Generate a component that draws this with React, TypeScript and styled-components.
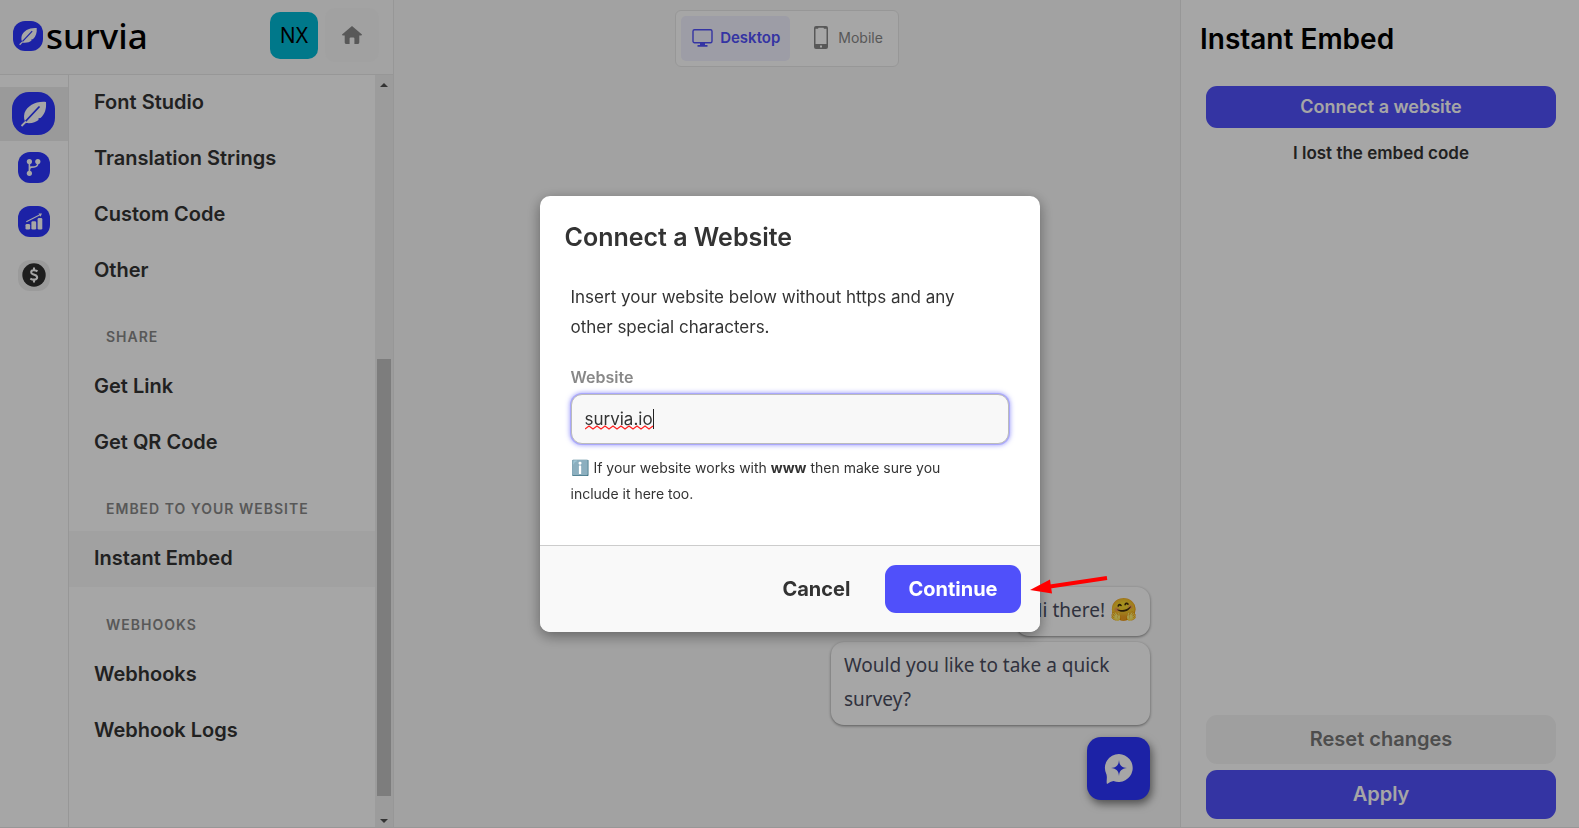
import React from 'react';
import styled, { createGlobalStyle, css } from 'styled-components';

const GlobalStyle = createGlobalStyle`
  *, *::before, *::after { box-sizing: border-box; }
  html, body, #root { height: 100%; }
  body { margin: 0; background: #fff; color: #333; font-family: Inter, Roboto, sans-serif; }
  button, input { font-family: inherit; }
  h1, h2, p, ul { margin: 0; padding: 0; }
`;

const border = '#e9e9e9';
const brand = '#2b35ff';
const primary = '#5050fa';

const Page = styled.div`
  display: flex;
  height: 100vh;
  min-height: 640px;
  overflow: hidden;
  border-bottom: 1px solid ${border};
`;

const Sidebar = styled.aside`
  display: flex;
  flex-direction: column;
  width: 394px;
  flex-shrink: 0;
  border-right: 1px solid ${border};
`;

const SidebarHeader = styled.header`
  display: flex;
  align-items: center;
  justify-content: space-between;
  height: 75px;
  flex-shrink: 0;
  padding: 0 14px 4px 13px;
  background: #fafafa;
  border-bottom: 1px solid ${border};
`;

const Logo = styled.a`
  display: flex;
  align-items: center;
  gap: 3px;
  padding-top: 2px;
  color: #000;
  text-decoration: none;
`;

const LogoText = styled.span`
  font: 500 35px/40px 'Noto Sans', sans-serif;
`;

const HeaderActions = styled.div`
  display: flex;
  align-items: center;
  gap: 7px;
`;

const Avatar = styled.button`
  width: 48px;
  height: 47px;
  padding: 0;
  border: 0;
  border-radius: 10px;
  background: #00b8d4;
  color: #000;
  font: 400 21px/47px 'Noto Sans', sans-serif;
`;

const HomeButton = styled.button`
  display: grid;
  place-items: center;
  width: 54px;
  height: 54px;
  padding: 0;
  border: 0;
  border-radius: 10px;
  background: #f8f8f8;
  color: #888;
`;

const SidebarBody = styled.div`
  display: flex;
  flex: 1;
  min-height: 0;
`;

const Rail = styled.nav`
  width: 69px;
  flex-shrink: 0;
  padding-top: 12px;
  border-right: 1px solid ${border};
`;

const RailButton = styled.button<{ $active?: boolean }>`
  display: grid;
  place-items: center;
  width: 100%;
  height: 54px;
  padding: 0 1px 2px 0;
  border: 0;
  background: ${p => (p.$active ? '#ededed' : 'transparent')};
`;

const IconTile = styled.span<{ $size?: 'logo' | 'large'; $muted?: boolean }>`
  display: grid;
  place-items: center;
  width: 32px;
  height: 31px;
  border-radius: 12px;
  background: ${p => (p.$muted ? '#efefef' : brand)};
  ${p => p.$size === 'large' && css`width: 43px; height: 43px; border-radius: 17px;`}
  ${p => p.$size === 'logo' && css`width: 30px; height: 30px; border-radius: 12px;`}
`;

const Menu = styled.nav`
  flex: 1;
  overflow: hidden;
`;

const MenuHeading = styled.h2`
  padding: 28px 37px 0;
  height: 60px;
  color: #888;
  font-size: 14px;
  line-height: 20px;
  font-weight: 600;
  letter-spacing: 1px;
`;

const MenuLink = styled.a<{ $active?: boolean }>`
  display: block;
  height: 56px;
  padding: 0 25px;
  color: #333;
  background: ${p => (p.$active ? '#f8f8f8' : 'transparent')};
  font-size: 20px;
  line-height: 55px;
  font-weight: 600;
  text-decoration: none;
`;

const ScrollTrack = styled.div`
  display: flex;
  flex-direction: column;
  justify-content: space-between;
  align-items: center;
  width: 18px;
  padding: 7px 0 3px;
  background: #f0f0f0;
`;

const ScrollSpace = styled.div`
  display: flex;
  flex-direction: column;
  justify-content: flex-end;
  flex: 1;
  padding: 4px 0 23px;
`;

const ScrollThumb = styled.div`
  width: 14px;
  height: 62%;
  background: #c1c1c1;
`;

const Canvas = styled.main`
  display: flex;
  flex-direction: column;
  justify-content: space-between;
  flex: 1;
  min-width: 0;
  background: #f9f9f9;
  padding: 10px 30px 27px;
`;

const DeviceSwitch = styled.div`
  display: flex;
  align-self: center;
  height: 57px;
  padding: 5px;
  border: 1px solid ${border};
  border-radius: 6px;
  background: #fff;
`;

const DeviceButton = styled.button<{ $active?: boolean }>`
  display: flex;
  align-items: center;
  gap: ${p => (p.$active ? 7 : 10)}px;
  padding: 0 10px 2px ${p => (p.$active ? 11 : 24)}px;
  border: 0;
  border-radius: 5px;
  background: ${p => (p.$active ? '#f2f2ff' : 'transparent')};
  color: ${p => (p.$active ? primary : '#888')};
  font-size: ${p => (p.$active ? 15 : 14)}px;
  line-height: 20px;
  font-weight: ${p => (p.$active ? 600 : 400)};
`;

const Widget = styled.section`
  display: flex;
  flex-direction: column;
  align-items: flex-end;
`;

const Bubble = styled.p`
  width: fit-content;
  max-width: 319px;
  margin-bottom: 6px;
  padding: 6px 13px 9px;
  border-radius: 13px;
  background: #fff;
  box-shadow: 0 1px 3px rgba(0, 0, 0, 0.45);
  color: #4a4d60;
  font: 400 19px/34px 'Noto Sans', 'Open Sans', sans-serif;
`;

const Emoji = styled.span<{ $size: number }>`
  font-size: ${p => p.$size}px;
  line-height: 1;
`;

const Launcher = styled.button`
  display: grid;
  place-items: center;
  width: 63px;
  height: 63px;
  margin-top: 6px;
  padding: 0;
  border: 0;
  border-radius: 14px;
  background: ${brand};
  box-shadow: 2px 4px 8px rgba(0, 0, 0, 0.5);
`;

const Panel = styled.aside`
  display: flex;
  flex-direction: column;
  width: 399px;
  flex-shrink: 0;
  padding: 19px 20px 8px 19px;
  border-left: 1px solid ${border};
`;

const PanelTitle = styled.h1`
  color: #000;
  font-size: 28px;
  line-height: 40px;
  font-weight: 600;
`;

const PanelActions = styled.div<{ $bottom?: boolean }>`
  display: flex;
  flex-direction: column;
  gap: 6px;
  padding: 0 3px 0 6px;
  margin-top: ${p => (p.$bottom ? 'auto' : '27px')};
`;

const PanelButton = styled.button<{ $tone: 'primary' | 'plain' | 'disabled'; $tall?: boolean }>`
  height: ${p => (p.$tall ? 49 : p.$tone === 'plain' ? 40 : 42)}px;
  padding: 0 0 2px;
  border: 0;
  border-radius: 11px;
  font-size: ${p => (p.$tall ? 20 : p.$tone === 'plain' ? 17 : 18)}px;
  font-weight: 600;
  ${p => p.$tone === 'primary' && css`background: ${primary}; color: #fff;`}
  ${p => p.$tone === 'plain' && css`background: transparent; color: #333;`}
  ${p => p.$tone === 'disabled' && css`background: #f5f5f5; color: #777;`}
`;

const Overlay = styled.div`
  position: fixed;
  inset: 0;
  display: grid;
  place-items: center;
  background: rgba(0, 0, 0, 0.35);
`;

const Modal = styled.form`
  position: relative;
  width: 500px;
  border-radius: 10px;
  background: #fff;
  box-shadow: 0 4px 14px rgba(0, 0, 0, 0.4);
`;

const ModalTitle = styled.h2`
  padding: 24px 25px 0;
  font-size: 25px;
  line-height: 34px;
  font-weight: 600;
  color: #333;
`;

const ModalBody = styled.div`
  display: flex;
  flex-direction: column;
  padding: 28px 31px 38px 31px;
`;

const Lead = styled.p`
  padding-right: 40px;
  font-size: 17px;
  line-height: 30px;
`;

const FieldLabel = styled.label`
  margin-top: 23px;
  color: #888;
  font-size: 16px;
  line-height: 24px;
  font-weight: 600;
`;

const Field = styled.div`
  position: relative;
  display: flex;
  margin-top: 5px;
`;

const TextInput = styled.input`
  width: 100%;
  height: 50px;
  padding: 0 13px;
  border: 1px solid #bbb;
  border-radius: 11px;
  outline: none;
  background: #f8f8f8;
  box-shadow: 0 0 0 1px #aaa8fc, 0 0 5px 1px rgba(80, 80, 250, 0.6);
  color: #333;
  font-size: 17px;
  line-height: 24px;
  caret-color: transparent;
`;

const SpellMark = styled.svg`
  position: absolute;
  left: 14px;
  top: 15px;
  pointer-events: none;
`;

const Hint = styled.p`
  margin-top: 11px;
  padding-right: 40px;
  font-size: 14px;
  line-height: 26px;
`;

const ModalFooter = styled.footer`
  display: flex;
  justify-content: flex-end;
  gap: 12px;
  padding: 19px;
  border-top: 1px solid #ccc;
  border-radius: 0 0 10px 10px;
  background: #f9f9f9;
`;

const ModalButton = styled.button<{ $primary?: boolean }>`
  height: 48px;
  padding: 0 23px;
  border: 0;
  border-radius: 11px;
  background: ${p => (p.$primary ? primary : 'transparent')};
  color: ${p => (p.$primary ? '#fff' : '#333')};
  font-size: 20px;
  font-weight: 700;
`;

const Pointer = styled.svg`
  position: absolute;
  left: 490px;
  bottom: 30px;
  pointer-events: none;
`;

const Feather = ({ size }: { size: number }) => (
  <svg width={size} height={size} viewBox="0 0 43 43" aria-hidden="true">
    <path d="M34 10C34.500 17 33 22 28.500 26L26.500 26.300L26.500 28C23.500 30.500 20 31.500 14 31C12 28.500 11.500 25 12.500 21C15.500 13.500 24 9 34 10Z" fill="#fff" />
    <path d="M27.500 14.500L12 31" stroke={brand} strokeWidth="1.800" />
    <path d="M14 29.500L9.500 34" stroke="#fff" strokeWidth="1.800" />
  </svg>
);

const BranchIcon = () => (
  <svg width="32" height="31" viewBox="0 0 32 31" fill="none" stroke="#fff" strokeWidth="1.600" aria-hidden="true">
    <path d="M11.400 9.500V21.500M19.800 9.500V11.500Q19.500 14.800 16 15L13.500 15.100Q11.600 15.300 11.400 18" />
    <g fill="#fff" stroke="none"><circle cx="11.400" cy="9.500" r="2.600" /><circle cx="19.800" cy="9.500" r="2.600" /><circle cx="11.400" cy="21.300" r="2.600" /></g>
  </svg>
);

const ChartIcon = () => (
  <svg width="32" height="31" viewBox="0 0 32 31" fill="#fff" aria-hidden="true">
    <rect x="7.500" y="18" width="4.600" height="5.500" rx="1.300" />
    <rect x="13.400" y="15.300" width="4.800" height="8.200" rx="1.300" />
    <rect x="19.600" y="12" width="4.700" height="11.500" rx="1.300" />
    <path d="M8.300 15.700L22.500 8.600" stroke="#fff" strokeWidth="1.100" />
    <path d="M20.500 7.500L24 7.400L22.500 10.700Z" />
  </svg>
);

const DollarIcon = () => (
  <svg width="24" height="24" viewBox="0 0 24 24" aria-hidden="true">
    <circle cx="12" cy="12" r="11.700" fill="#2e2e2e" />
    <path d="M15.500 8.300C14 7.500 12.500 7.200 11.300 7.300C8.600 7.600 8.500 10.400 11 11.200L13 11.900C16 12.900 15.700 16.200 12.800 16.600C11.300 16.800 9.700 16.400 8.300 15.600M12 4.500V7.500M12 16.300V19.500" fill="none" stroke="#fff" strokeWidth="2.100" />
  </svg>
);

const HomeIcon = () => (
  <svg width="20" height="18" viewBox="0 0 20 18" fill="currentColor" aria-hidden="true">
    <path d="M10 0L20 8.500Q20 9.400 19 9.400H17.300V16.600Q17.300 18 16 18H12.400V12.500Q12.400 11.500 11.400 11.500H8.600Q7.600 11.500 7.600 12.500V18H4Q2.700 18 2.700 16.600V9.400H1Q0 9.400 0 8.500Z" />
  </svg>
);

const DesktopIcon = () => (
  <svg width="21" height="20" viewBox="0 0 21 20" fill="currentColor" aria-hidden="true">
    <rect x="1" y="1.700" width="19" height="13" rx="1.500" fill="none" stroke="currentColor" strokeWidth="1.400" />
    <path d="M8 15H13V17H15.500V18.800H5.500V17H8Z" />
  </svg>
);

const MobileIcon = () => (
  <svg width="14" height="23" viewBox="0 0 14 23" aria-hidden="true">
    <path fillRule="evenodd" fill="currentColor" d="M2 0H12Q14 0 14 2V21Q14 23 12 23H2Q0 23 0 21V2Q0 0 2 0ZM1.500 2.700V18H12.500V2.700H10L9.500 1.800H4.500L4 2.700ZM6 19.400V21.400H8V19.400Z" />
  </svg>
);

const ChatIcon = () => (
  <svg width="30" height="32" viewBox="0 0 30 32" aria-hidden="true">
    <path d="M15 1A14 14 0 1 1 9.500 28C7 28.300 5.500 29.500 3 31C2 28 3.500 26 2.500 21.500A14 14 0 0 1 15 1Z" fill="#fff" />
    <path d="M15 7C15.500 12.500 17.500 14.500 23 15C17.500 15.700 15.500 17.500 15 23C14.500 17.500 12.500 15.700 7 15C12.500 14.500 14.500 12.500 15 7Z" fill={brand} />
  </svg>
);

const Arrow = ({ down }: { down?: boolean }) => (
  <svg width="8" height="5" viewBox="0 0 8 5" aria-hidden="true">
    <path d={down ? 'M0 0H8L4 4Z' : 'M0 5H8L4 1Z'} fill="#505050" />
  </svg>
);

const squiggle = Array.from({ length: 18 }, (_, i) => `${i === 0 ? 'M' : 'L'}${i * 4} ${i % 2 ? 17 : 20}`).join(' ');

const menu = [
  { title: '', links: ['Font Studio', 'Translation Strings', 'Custom Code', 'Other'] },
  { title: 'SHARE', links: ['Get Link', 'Get QR Code'] },
  { title: 'EMBED TO YOUR WEBSITE', links: ['Instant Embed'] },
  { title: 'WEBHOOKS', links: ['Webhooks', 'Webhook Logs'] },
];

export default function App() {
  return (
    <>
      <GlobalStyle />
      <Page>
        <Sidebar>
          <SidebarHeader>
            <Logo href="#">
              <IconTile $size="logo"><Feather size={30} /></IconTile>
              <LogoText>survia</LogoText>
            </Logo>
            <HeaderActions>
              <Avatar type="button">NX</Avatar>
              <HomeButton type="button" aria-label="Home"><HomeIcon /></HomeButton>
            </HeaderActions>
          </SidebarHeader>
          <SidebarBody>
            <Rail>
              <RailButton $active type="button" aria-label="Design"><IconTile $size="large"><Feather size={43} /></IconTile></RailButton>
              <RailButton type="button" aria-label="Flow"><IconTile><BranchIcon /></IconTile></RailButton>
              <RailButton type="button" aria-label="Analytics"><IconTile><ChartIcon /></IconTile></RailButton>
              <RailButton type="button" aria-label="Billing"><IconTile $muted><DollarIcon /></IconTile></RailButton>
            </Rail>
            <Menu>
              {menu.map(section => (
                <React.Fragment key={section.title}>
                  {section.title && <MenuHeading>{section.title}</MenuHeading>}
                  {section.links.map(link => (
                    <MenuLink key={link} href="#" $active={link === 'Instant Embed'}>{link}</MenuLink>
                  ))}
                </React.Fragment>
              ))}
            </Menu>
            <ScrollTrack>
              <Arrow />
              <ScrollSpace><ScrollThumb /></ScrollSpace>
              <Arrow down />
            </ScrollTrack>
          </SidebarBody>
        </Sidebar>

        <Canvas>
          <DeviceSwitch>
            <DeviceButton $active type="button"><DesktopIcon />Desktop</DeviceButton>
            <DeviceButton type="button"><MobileIcon />Mobile</DeviceButton>
          </DeviceSwitch>
          <Widget>
            <Bubble>Hi there! <Emoji $size={22}>🤗</Emoji></Bubble>
            <Bubble>Would you like to take a quick survey?</Bubble>
            <Launcher type="button" aria-label="Open survey"><ChatIcon /></Launcher>
          </Widget>
        </Canvas>

        <Panel>
          <PanelTitle>Instant Embed</PanelTitle>
          <PanelActions>
            <PanelButton $tone="primary" type="button">Connect a website</PanelButton>
            <PanelButton $tone="plain" type="button">I lost the embed code</PanelButton>
          </PanelActions>
          <PanelActions $bottom>
            <PanelButton $tone="disabled" $tall type="button">Reset changes</PanelButton>
            <PanelButton $tone="primary" $tall type="button">Apply</PanelButton>
          </PanelActions>
        </Panel>
      </Page>

      <Overlay>
        <Modal role="dialog" aria-modal="true" aria-labelledby="dialog-title">
          <ModalTitle id="dialog-title">Connect a Website</ModalTitle>
          <ModalBody>
            <Lead>Insert your website below without https and any other special characters.</Lead>
            <FieldLabel htmlFor="website">Website</FieldLabel>
            <Field>
              <TextInput id="website" type="text" defaultValue="survia.io" spellCheck={false} />
              <SpellMark width="70" height="22" viewBox="0 0 70 22" aria-hidden="true">
                <path d={squiggle} fill="none" stroke="#f22" strokeWidth="1.200" />
                <path d="M68.500 0V20" stroke="#222" />
              </SpellMark>
            </Field>
            <Hint><Emoji $size={15}>ℹ️</Emoji> If your website works with <strong>www</strong> then make sure you include it here too.</Hint>
          </ModalBody>
          <ModalFooter>
            <ModalButton type="button">Cancel</ModalButton>
            <ModalButton $primary type="button">Continue</ModalButton>
          </ModalFooter>
          <Pointer width="80" height="30" viewBox="0 0 80 30" aria-hidden="true">
            <path d="M77 6L20 14.500" stroke="#f00" strokeWidth="4" />
            <path d="M0 18L20 7.500L22 21.500Z" fill="#f00" />
          </Pointer>
        </Modal>
      </Overlay>
    </>
  );
}
